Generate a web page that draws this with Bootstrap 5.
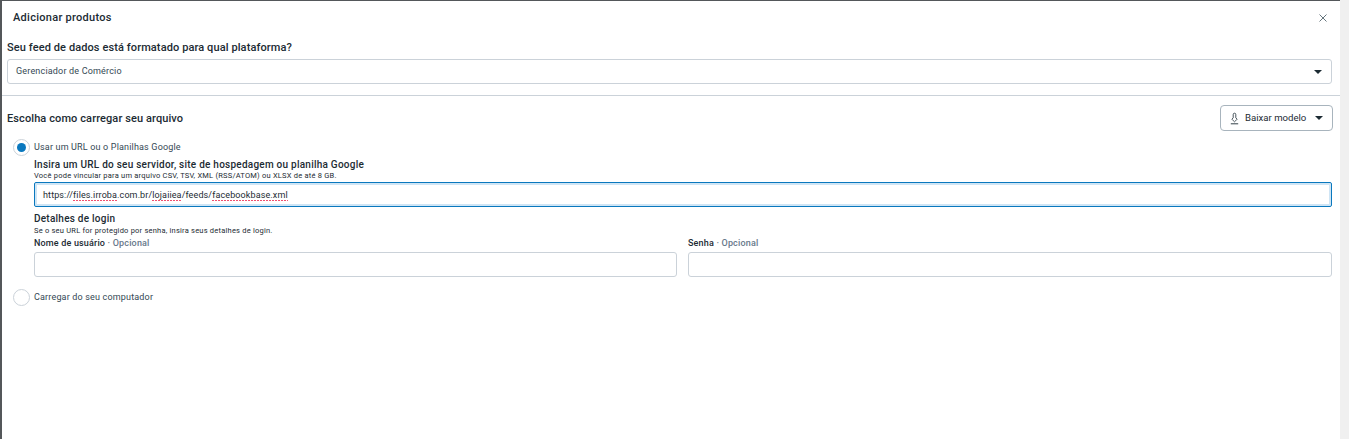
<!DOCTYPE html>
<html lang="pt-BR">
<head>
<meta charset="utf-8">
<title>Adicionar produtos</title>
<link href="https://cdn.jsdelivr.net/npm/bootstrap@5.3.0/dist/css/bootstrap.min.css" rel="stylesheet">
<style>
html,body{height:100%;overflow:hidden}
body{background:#f0f0f0;font-family:Roboto,"Liberation Sans",sans-serif;color:#1c2b33;font-size:9px}
.backdrop-strip{background:#54575a;height:439px;padding:1px 0 0 2px;width:1340px}
.panel-sheet{background:#fff;height:100%;width:1338px}
.panel-head{height:40px;padding:0 13px 7px 11px}
.panel-title{font-size:11px;font-weight:500;margin:0;color:#1c2b33;letter-spacing:.28px}
.close-x{background:none;border:0;padding:0;line-height:0}
.sec-one{padding:0 8px 11px 5px;border-bottom:1px solid #cbd2d9}
.q-label{font-size:11px;font-weight:500;line-height:13px;margin-bottom:5px;letter-spacing:.1px}
.fake-select{height:25px;border:1px solid #cbd2d9;border-radius:3px;padding:1px 9px 0 8px;font-size:9px;color:#344854;letter-spacing:.18px}
.tri{width:0;height:0;border-left:4px solid transparent;border-right:4px solid transparent;border-top:4px solid #1c2b33;display:block}
.sec-two{padding:9px 8px 0 5px}
.dl-btn{height:26px;width:113px;margin-right:-1px;border:1px solid #a8b4bd;border-radius:4px;background:#fff;font-size:9.600px;color:#1c2b33;padding:0 9px 0 8px;gap:5px}
.radio-ring{width:17px;height:17px;border:1px solid #cbd2d9;border-radius:50%;background:#fff;flex:none}
.radio-ring.is-on::after{content:"";width:9px;height:9px;border-radius:50%;background:#0a78be}
.radio-row{gap:4px;font-size:9px;color:#344854;margin-left:6px;letter-spacing:.17px}
.url-block{padding-left:27px}
.sub-h{font-size:10px;font-weight:500;line-height:12px;color:#1c2b33;letter-spacing:.24px}
.sub-note{font-size:7.500px;line-height:9px;color:#1c2b33;letter-spacing:.22px}
.url-input{display:block;width:100%;height:25px;border:1px solid #0a78be;border-radius:2px;box-shadow:inset 0 0 0 2px #cfe5f5;padding:0 8px;font-size:9px;color:#1c2b33;background:#fff;line-height:24px;letter-spacing:.115px}
.typo{padding-bottom:1px;background:repeating-linear-gradient(90deg,#f0506e 0 2px,transparent 2px 3px) left bottom/100% 1px no-repeat}
.field-label{font-size:9px;font-weight:500;line-height:11px;margin-bottom:3px;letter-spacing:.17px}
.opt{color:#67788a}
.plain-input{display:block;width:100%;height:25px;border:1px solid #cbd2d9;border-radius:3px;background:#fff}
.login-grid{column-gap:11px;grid-template-columns:calc(50% - 6px) 1fr}
.gap-after-head{margin-top:8px}
.url-top{margin-top:3px}
.note-tight{margin-bottom:2px}
.login-h{margin-top:6px}
.login-note{margin-top:1px;margin-bottom:1px}
.field-top{margin-top:2px}
.radio-low{margin-top:12px}
</style>
</head>
<body>
<div class="backdrop-strip">
  <div class="panel-sheet d-flex flex-column">
    <div class="panel-head d-flex align-items-center justify-content-between">
      <h1 class="panel-title">Adicionar produtos</h1>
      <button class="close-x" type="button" aria-label="Fechar">
        <svg width="8" height="8" viewBox="0 0 8 8"><path d="M.5.5l7 7M7.500.5l-7 7" stroke="#56666f" stroke-width=".9" fill="none"/></svg>
      </button>
    </div>
    <div class="sec-one">
      <div class="q-label">Seu feed de dados está formatado para qual plataforma?</div>
      <div class="fake-select d-flex align-items-center justify-content-between">
        <span>Gerenciador de Comércio</span><span class="tri"></span>
      </div>
    </div>
    <div class="sec-two">
      <div class="d-flex justify-content-between align-items-center">
        <div class="q-label mb-0">Escolha como carregar seu arquivo</div>
        <button class="dl-btn d-flex align-items-center" type="button">
          <svg width="11" height="13" viewBox="0 0 11 13"><path d="M5.500 1.200c-.9 0-1.300.6-1.300 1.300v3.300L2.900 7.200c1 1.200 1.900 2 2.600 2.600.7-.6 1.600-1.400 2.600-2.600L6.800 5.800V2.500c0-.7-.4-1.300-1.300-1.300z" stroke="#1c2b33" stroke-width=".8" fill="none"/><path d="M1.800 11.800h7.400" stroke="#1c2b33" stroke-width=".9"/></svg>
          <span class="flex-grow-1 text-start">Baixar modelo</span><span class="tri"></span>
        </button>
      </div>
      <div class="radio-row gap-after-head d-flex align-items-center">
        <span class="radio-ring is-on d-flex align-items-center justify-content-center"></span>
        <span>Usar um URL ou o Planilhas Google</span>
      </div>
      <div class="url-block">
        <div class="sub-h url-top">Insira um URL do seu servidor, site de hospedagem ou planilha Google</div>
        <div class="sub-note note-tight">Você pode vincular para um arquivo CSV, TSV, XML (RSS/ATOM) ou XLSX de até 8 GB.</div>
        <div class="url-input">https://<span class="typo">files.irroba</span>.com.br/<span class="typo">lojaiiea</span>/feeds/<span class="typo">facebookbase.xml</span></div>
        <div class="sub-h login-h">Detalhes de login</div>
        <div class="sub-note login-note">Se o seu URL for protegido por senha, insira seus detalhes de login.</div>
        <div class="login-grid d-grid">
          <div><div class="field-label field-top">Nome de usuário <span class="opt">· Opcional</span></div><input class="plain-input" type="text" aria-label="Nome de usuário"></div>
          <div><div class="field-label field-top">Senha <span class="opt">· Opcional</span></div><input class="plain-input" type="password" aria-label="Senha"></div>
        </div>
      </div>
      <div class="radio-row radio-low d-flex align-items-center">
        <span class="radio-ring"></span>
        <span>Carregar do seu computador</span>
      </div>
    </div>
  </div>
</div>
<script src="https://cdn.jsdelivr.net/npm/bootstrap@5.3.0/dist/js/bootstrap.bundle.min.js"></script>
</body>
</html>
